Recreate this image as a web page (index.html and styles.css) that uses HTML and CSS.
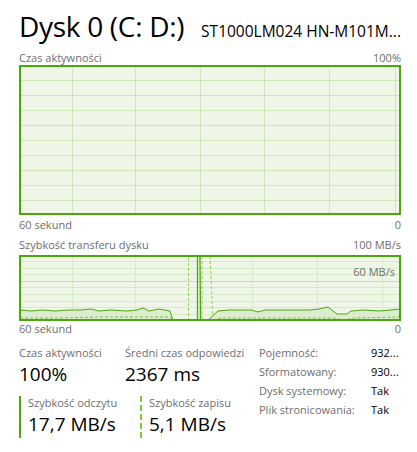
FILE: index.html
```html
<!DOCTYPE html>
<html lang="pl">
<head>
<meta charset="utf-8">
<link rel="stylesheet" href="styles.css">
</head>
<body>
<div class="page">
  <header class="head">
    <h1 class="title">Dysk 0 (C: D:)</h1>
    <div class="model">ST1000LM024 HN-M101M...</div>
  </header>

  <div class="axis axis-top"><span>Czas aktywności</span><span>100%</span></div>
  <div class="chart chart1">
    <svg width="382" height="150" viewBox="0 0 382 150">
      <rect x="0" y="0" width="382" height="150" fill="#eff6e8"/>
      <g stroke="#cde7b9" stroke-width="1">
        <line x1="0" y1="15.5" x2="382" y2="15.5"/>
        <line x1="0" y1="30.5" x2="382" y2="30.5"/>
        <line x1="0" y1="45.5" x2="382" y2="45.5"/>
        <line x1="0" y1="60.5" x2="382" y2="60.5"/>
        <line x1="0" y1="75.5" x2="382" y2="75.5"/>
        <line x1="0" y1="90.5" x2="382" y2="90.5"/>
        <line x1="0" y1="105.5" x2="382" y2="105.5"/>
        <line x1="0" y1="120.5" x2="382" y2="120.5"/>
        <line x1="0" y1="135.5" x2="382" y2="135.5"/>
        <line x1="53.5" y1="0" x2="53.5" y2="150"/>
        <line x1="116.5" y1="0" x2="116.5" y2="150"/>
        <line x1="181.5" y1="0" x2="181.5" y2="150"/>
        <line x1="245.5" y1="0" x2="245.5" y2="150"/>
        <line x1="310.5" y1="0" x2="310.5" y2="150"/>
        <line x1="376.5" y1="0" x2="376.5" y2="150"/>
      </g>
      <rect x="1" y="1" width="380" height="148" fill="none" stroke="#4da60c" stroke-width="2"/>
    </svg>
  </div>
  <div class="axis axis-bottom"><span>60 sekund</span><span>0</span></div>

  <div class="axis axis-top2"><span>Szybkość transferu dysku</span><span>100 MB/s</span></div>
  <div class="chart chart2">
    <svg width="382" height="66" viewBox="0 0 382 66">
      <rect x="0" y="0" width="382" height="66" fill="#eff6e8"/>
      <g stroke="#d6ecc6" stroke-width="1">
        <line x1="0" y1="6.5" x2="382" y2="6.5"/>
        <line x1="0" y1="13.5" x2="382" y2="13.5"/>
        <line x1="0" y1="19.5" x2="382" y2="19.5"/>
        <line x1="0" y1="32.5" x2="382" y2="32.5"/>
        <line x1="0" y1="39.5" x2="382" y2="39.5"/>
        <line x1="0" y1="46.5" x2="382" y2="46.5"/>
        <line x1="0" y1="52.5" x2="382" y2="52.5"/>
        <line x1="0" y1="59.5" x2="382" y2="59.5"/>
        <line x1="53.5" y1="0" x2="53.5" y2="66"/>
        <line x1="116.5" y1="0" x2="116.5" y2="66"/>
        <line x1="233.5" y1="0" x2="233.5" y2="66"/>
        <line x1="298.5" y1="0" x2="298.5" y2="66"/>
        <line x1="363.5" y1="0" x2="363.5" y2="66"/>
      </g>
      <line x1="0" y1="26.5" x2="382" y2="26.5" stroke="#c2e1aa" stroke-width="1"/>
      <!-- left segment -->
      <path d="M1 55 L12 56 L24 55 L36 56 L50 55 L62 55 L72 54 L80 56 L92 55 L108 56 L118 55 L124 53 L130 56 L140 54 L146 55 L151 56 L154 66 L1 66 Z" fill="#dcedcf"/>
      <path d="M1 55 L12 56 L24 55 L36 56 L50 55 L62 55 L72 54 L80 56 L92 55 L108 56 L118 55 L124 53 L130 56 L140 54 L146 55 L151 56 L154 65" fill="none" stroke="#4da60c" stroke-width="1"/>
      <path d="M1 63 L40 63 L80 62 L120 62 L150 62 L154 64" fill="none" stroke="#7bc443" stroke-width="1" stroke-dasharray="3 2"/>
      <!-- spikes -->
      <path d="M169.5 66 L169.5 1" fill="none" stroke="#8fd14f" stroke-width="1" stroke-dasharray="3 2"/>
      <path d="M178.5 66 L178.5 1 L181 1 L181.5 66" fill="none" stroke="#4da60c" stroke-width="1.3"/>
      <path d="M183 1 L183 66 M191 1 L194 66" fill="none" stroke="#8fd14f" stroke-width="1" stroke-dasharray="3 2"/>
      <!-- right segment -->
      <path d="M188 66 L199 56 L210 55 L222 55 L232 55 L239 57 L246 55 L270 55 L290 55 L300 54 L309 52 L318 59 L328 59 L332 56 L345 55 L360 56 L372 55 L381 54 L381 66 Z" fill="#dcedcf"/>
      <path d="M188 66 L199 56 L210 55 L222 55 L232 55 L239 57 L246 55 L270 55 L290 55 L300 54 L309 52 L318 59 L328 59 L332 56 L345 55 L360 56 L372 55 L381 54" fill="none" stroke="#4da60c" stroke-width="1"/>
      <path d="M194 65 L202 63 L240 63 L280 63 L315 63 L324 65 L336 63 L381 62" fill="none" stroke="#7bc443" stroke-width="1" stroke-dasharray="3 2"/>
      <rect x="1" y="1" width="380" height="64" fill="none" stroke="#4da60c" stroke-width="2"/>
    </svg>
    <span class="mark">60 MB/s</span>
  </div>
  <div class="axis axis-bottom2"><span>60 sekund</span><span>0</span></div>

  <section class="stats">
    <div class="left">
      <div class="pair">
        <div class="stat stat-a">
          <div class="label">Czas aktywności</div>
          <div class="value">100%</div>
        </div>
        <div class="stat stat-b">
          <div class="label">Średni czas odpowiedzi</div>
          <div class="value">2367 ms</div>
        </div>
      </div>
      <div class="pair">
        <div class="stat bar solid">
          <div class="label">Szybkość odczytu</div>
          <div class="value">17,7 MB/s</div>
        </div>
        <div class="stat bar dashed">
          <div class="label">Szybkość zapisu</div>
          <div class="value">5,1 MB/s</div>
        </div>
      </div>
    </div>
    <dl class="props">
      <dt>Pojemność:</dt><dd>932...</dd>
      <dt>Sformatowany:</dt><dd>930...</dd>
      <dt>Dysk systemowy:</dt><dd>Tak</dd>
      <dt>Plik stronicowania:</dt><dd>Tak</dd>
    </dl>
  </section>
</div>
</body>
</html>
```
FILE: styles.css
```css
* { box-sizing: border-box; }
html, body { margin: 0; padding: 0; background: #fff; }
body {
  font-family: "Open Sans", "Noto Sans", sans-serif;
  color: #000;
  width: 417px;
  height: 452px;
  overflow: hidden;
}
.page { padding: 8px 16px 0 19px; }

.head {
  display: flex;
  align-items: baseline;
  justify-content: space-between;
  height: 42px;
}
.title {
  margin: 0;
  font-weight: 400;
  font-size: 28px;
  line-height: 36px;
  letter-spacing: -0.3px;
}
.model {
  font-size: 15.5px;
}

.axis {
  display: flex;
  justify-content: space-between;
  font-size: 11px;
  color: #6e6e6e;
  line-height: 15px;
  width: 382px;
}
.axis-bottom { margin-top: 2px; }
.axis-bottom2 { margin-top: 0; }
.axis-top2 { margin-top: 5px; }

.chart { position: relative; width: 382px; line-height: 0; }
.chart2 { margin-top: 3px; }
.chart svg { display: block; }
.mark {
  position: absolute;
  right: 6px;
  top: 10px;
  font-size: 11px;
  line-height: 13px;
  color: #6e6e6e;
}

.stats {
  display: flex;
  align-items: flex-start;
  margin-top: 10px;
}
.left { display: flex; flex-direction: column; gap: 8px; width: 240px; }
.pair { display: flex; }
.stat-a { width: 106px; }
.stat-b { width: 134px; }
.label {
  font-size: 11px;
  line-height: 14px;
  color: #6e6e6e;
  white-space: nowrap;
}
.value {
  font-size: 19px;
  line-height: 28px;
  white-space: nowrap;
}
.bar { padding-left: 7px; }
.bar.solid { width: 121px; border-left: 2px solid #4da60c; }
.bar.dashed { border-left: 2px dashed #7cc937; }

.props {
  margin: 0;
  display: grid;
  grid-template-columns: 112px auto;
  row-gap: 5px;
  font-size: 11px;
  line-height: 14px;
}
.props dt { color: #6e6e6e; }
.props dd { margin: 0; }
```
